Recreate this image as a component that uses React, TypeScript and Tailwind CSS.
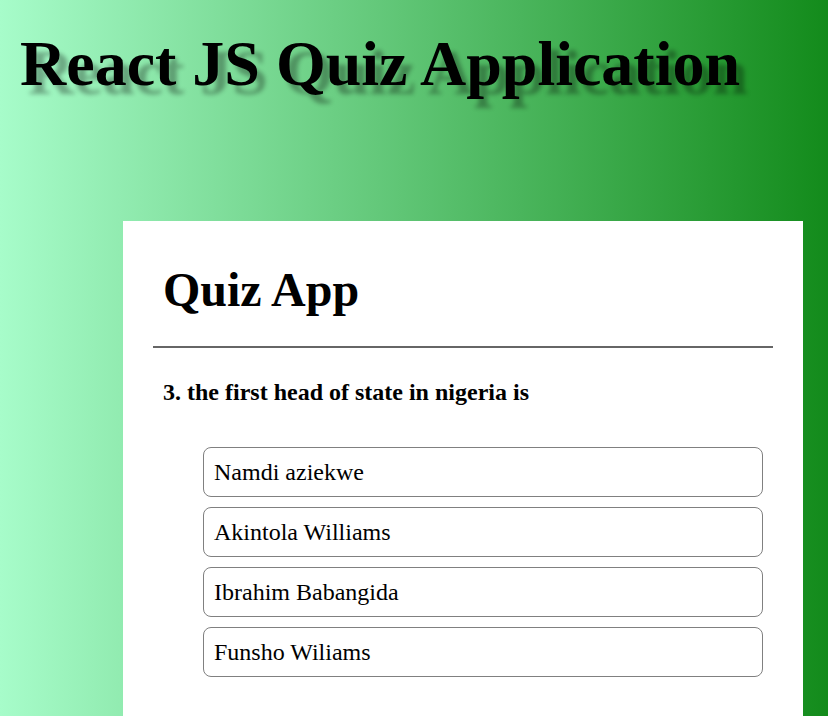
import React from 'react';

const options = ['Namdi aziekwe', 'Akintola Williams', 'Ibrahim Babangida', 'Funsho Wiliams'];

const App: React.FC = () => {
  return (
    <div className="min-h-screen flex flex-col bg-[linear-gradient(to_right,#a7fcca,#138b1b)] font-['Liberation_Serif','Times_New_Roman',serif] text-black">
      {/* Page title */}
      <h1 className="pt-[28px] pl-[20px] text-[64px] font-bold leading-[71px] [text-shadow:8px_9px_4px_rgba(0,0,0,0.3)]">
        React JS Quiz Application
      </h1>

      {/* Quiz card */}
      <div className="flex-1 mt-[122px] ml-[123px] w-[680px] bg-white px-[30px] pt-[42px] pb-[40px]">
        <h2 className="pl-[10px] text-[48px] font-bold leading-[53px]">Quiz App</h2>
        <hr className="mt-[30px] border-0 h-[2px] bg-[#666666]" />

        <div className="mx-[10px]">
          <p className="mt-[31px] text-[24px] font-bold leading-[27px]">
            3. the first head of state in nigeria is
          </p>

          <ul className="mt-[41px] pl-[40px] flex flex-col gap-[10px]">
            {options.map((opt) => (
              <li
                key={opt}
                className="h-[50px] border border-[#808080] rounded-[8px] px-[10px] flex items-center text-[24px] leading-[28px] cursor-pointer"
              >
                {opt}
              </li>
            ))}
          </ul>
        </div>
      </div>
    </div>
  );
};

export default App;
